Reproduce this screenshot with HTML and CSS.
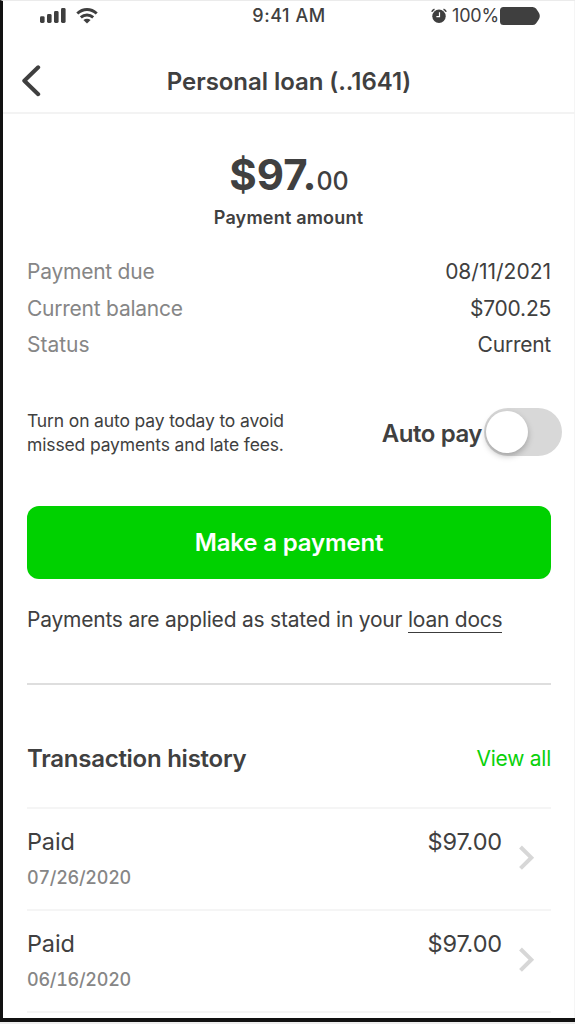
FILE: index.html
```html
<!DOCTYPE html>
<html lang="en">
<head>
<meta charset="utf-8">
<title>Personal loan</title>
<link rel="stylesheet" href="styles.css">
</head>
<body>
<div class="phone">
  <div class="status-bar">
    <div class="status-left">
      <svg class="signal" width="26" height="16" viewBox="0 0 26 16"><rect x="0" y="8.2" width="4.6" height="6.8" rx="1.4"/><rect x="7" y="6" width="4.6" height="9" rx="1.4"/><rect x="14" y="3" width="4.6" height="12" rx="1.4"/><rect x="21" y="0" width="4.6" height="15" rx="1.4"/></svg>
      <svg class="wifi" width="22" height="16" viewBox="0 0 22 16"><path class="wave" d="M1.3 5.5Q5.7 1.5 11 1.5T20.7 5.5M4.8 9.3Q7.6 6.9 11 6.9T17.2 9.3"/><path d="M7.4 12Q11 9.6 14.6 12L11 15.5Z"/></svg>
    </div>
    <span class="clock">9:41 AM</span>
    <div class="status-right">
      <svg class="alarm" width="16" height="16" viewBox="0 0 16 16"><circle cx="8" cy="8.2" r="6.7"/><path class="bells" d="M.8 3.8Q1.6 1.9 3.5 1.2M15.2 3.8Q14.4 1.9 12.5 1.2"/><path class="hands" d="M8.5 4.2V8.6H5.4"/></svg>
      <span class="percent">100%</span>
      <svg class="battery" width="40" height="18" viewBox="0 0 40 18"><path d="M3.5 0H32.5Q34.6 0 36 1.5L38.4 5Q39.8 7 39.8 9T38.4 13L36 16.5Q34.6 18 32.5 18H3.5Q0 18 0 14.5V3.5Q0 0 3.5 0Z"/></svg>
    </div>
  </div>
  <header class="header">
    <svg class="back" width="19" height="32" viewBox="0 0 19 32"><path d="M16.2 2.3L2.3 15.7L16.2 29.2"/></svg>
    <h1 class="title">Personal loan (..1641)</h1>
  </header>
  <main class="content">
    <section class="amount">
      <div class="amount-value"><span class="dollars">$97.</span><span class="cents">00</span></div>
      <div class="amount-label">Payment amount</div>
    </section>
    <dl class="details">
      <div class="detail"><dt>Payment due</dt><dd class="due">08/11/2021</dd></div>
      <div class="detail"><dt>Current balance</dt><dd>$700.25</dd></div>
      <div class="detail"><dt class="status">Status</dt><dd>Current</dd></div>
    </dl>
    <section class="autopay">
      <p class="autopay-text">Turn on auto pay today to avoid<br>missed payments and late fees.</p>
      <div class="autopay-control"><span class="autopay-label">Auto pay</span><span class="toggle"><span class="knob"></span></span></div>
    </section>
    <button class="pay-button">Make a payment</button>
    <p class="note">Payments are applied as stated in your <a class="docs">loan docs</a></p>
    <section class="history">
      <div class="history-head"><h2 class="history-title">Transaction history</h2><a class="view-all">View all</a></div>
      <div class="transaction">
        <div class="info"><span class="state">Paid</span><span class="date">07/26/2020</span></div>
        <span class="sum">$97.00</span>
        <svg class="chevron" width="17" height="26" viewBox="0 0 17 26"><path d="M2.5 2L13.3 12.7L2.5 23.4"/></svg>
      </div>
      <div class="transaction">
        <div class="info"><span class="state">Paid</span><span class="date">06/16/2020</span></div>
        <span class="sum">$97.00</span>
        <svg class="chevron" width="17" height="26" viewBox="0 0 17 26"><path d="M2.5 2L13.3 12.7L2.5 23.4"/></svg>
      </div>
    </section>
  </main>
</div>
</body>
</html>
```
FILE: styles.css
```css
* { box-sizing: border-box; margin: 0; padding: 0; }
body { width: 575px; height: 1024px; overflow: hidden; background: #ededed; font-family: Inter, "Liberation Sans", sans-serif; color: #404040; white-space: nowrap; }
svg { display: block; flex: none; fill: #3f3f3f; }
.phone { height: 1022px; overflow: hidden; background: #fff; border-left: 3px solid #111; border-bottom: 4px solid #111; border-top: 1px solid #ebebeb; box-shadow: inset -1px 0 #f5f5f5; }
.status-bar { height: 29px; display: grid; grid-template-columns: 1fr auto 1fr; align-items: center; padding: 0 35px 0 37px; }
.status-left, .status-right { display: flex; align-items: center; }
.status-left { gap: 10px; }
.status-right { justify-content: flex-end; }
.wave { fill: none; stroke: #3f3f3f; stroke-width: 3; }
.clock { font-size: 18px; font-weight: 500; letter-spacing: .55px; margin-right: 2px; }
.percent { font-size: 18px; letter-spacing: -.2px; margin: 0 1px 0 5px; }
.bells { fill: none; stroke: #3f3f3f; stroke-width: 1.6; }
.hands { fill: none; stroke: #fff; stroke-width: 1.2; }
.header { height: 84px; display: grid; grid-template-columns: 40px 1fr 40px; align-items: center; padding: 20px 17px 0 19px; border-bottom: 2px solid #f3f3f3; }
.back { fill: none; stroke: #3f3f3f; stroke-width: 4; stroke-linecap: round; stroke-linejoin: round; }
.title { font-size: 24px; font-weight: 600; letter-spacing: -.05px; line-height: 30px; text-align: center; margin: 2px 0 0 -2px; }
.content { padding: 0 24px; }
.amount { text-align: center; padding-top: 35px; }
.amount-value { line-height: 52px; height: 52px; }
.dollars { font-size: 42px; font-weight: 700; }
.cents { font-size: 25px; font-weight: 500; }
.amount-label { font-size: 18px; font-weight: 600; letter-spacing: .2px; line-height: 24px; margin: 5px 1px 0 0; }
.details { margin-top: 24px; }
.detail { display: flex; justify-content: space-between; font-size: 21px; letter-spacing: -.24px; line-height: 36.5px; }
.detail dt { color: #868686; }
.due, .detail .status { letter-spacing: 0; }
.autopay { display: flex; justify-content: space-between; align-items: center; margin: 45px -11px 0 0; height: 49px; }
.autopay-text { font-size: 17.5px; letter-spacing: -.14px; line-height: 24.5px; }
.autopay-control { display: flex; align-items: center; gap: 2px; }
.autopay-label { font-size: 24px; font-weight: 600; letter-spacing: -.45px; }
.toggle { width: 78px; height: 48px; border-radius: 24px; background: #d8d8d8; padding: 3px 0 0 2px; margin-top: -3px; }
.knob { display: block; width: 42px; height: 42px; border-radius: 50%; background: #fff; box-shadow: 0 3px 6px rgba(0,0,0,.25); }
.pay-button { display: block; width: 524px; height: 73px; margin-top: 48px; border: 0; border-radius: 12px; background: #00d100; color: #fff; font: 600 24px Inter, "Liberation Sans", sans-serif; letter-spacing: -.15px; }
.note { font-size: 21px; letter-spacing: -.22px; line-height: 30px; margin-top: 26px; }
.docs { display: inline-block; line-height: 25px; border-bottom: 1.5px solid #3c3c3c; }
.history { margin-top: 48px; border-top: 2px solid #dedede; }
.history-head { height: 122px; padding-top: 26px; display: flex; align-items: center; justify-content: space-between; }
.history-title { font-size: 24px; font-weight: 600; letter-spacing: -.26px; }
.view-all { color: #0ad10a; font-size: 21px; letter-spacing: -.25px; }
.transaction { height: 102px; display: flex; border-top: 2px solid #f5f5f5; padding: 18px 16px 0 0; }
.transaction:last-child { height: 104px; border-bottom: 2px solid #f5f5f5; }
.info { display: flex; flex-direction: column; gap: 6px; flex: 1; align-items: flex-start; }
.state, .sum { font-size: 23.5px; letter-spacing: -.15px; line-height: 30px; }
.date { font-size: 18px; font-weight: 500; letter-spacing: -.27px; font-variant-numeric: tabular-nums; line-height: 30px; color: #868686; }
.chevron { margin: 18px 0 0 16px; fill: none; stroke: #d7d7d7; stroke-width: 4; }
```
